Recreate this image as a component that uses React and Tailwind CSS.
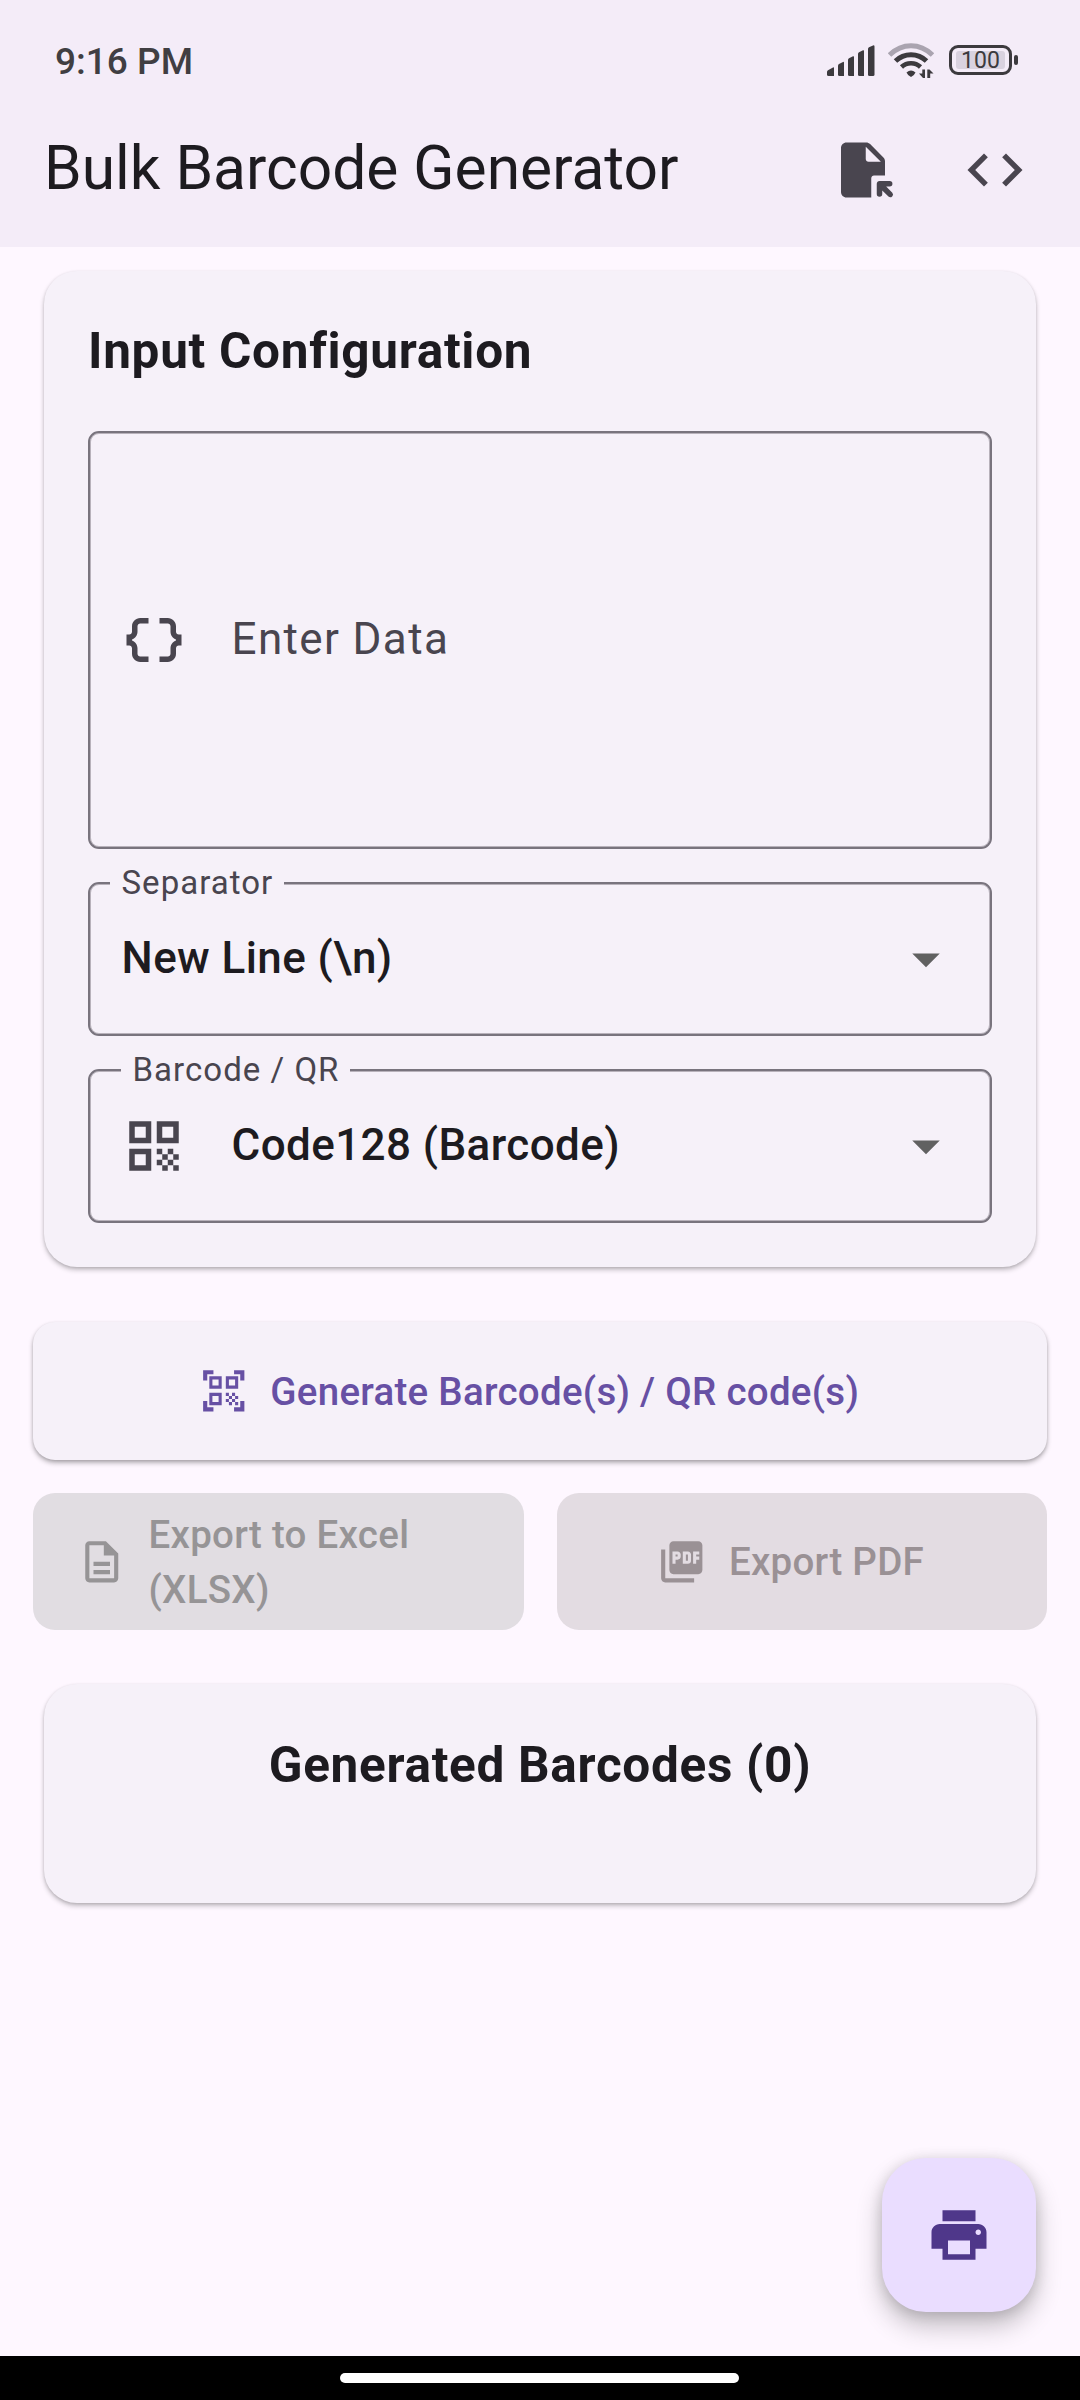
import { MdCode, MdDataObject, MdQrCode, MdQrCodeScanner, MdOutlineDescription, MdPictureAsPdf, MdPrint, MdArrowDropDown } from "react-icons/md";

function SignalIcon() {
  return (
    <svg className="mt-px" width="48" height="32" viewBox="0 0 48 32" fill="#3c3a3e">
      <path d="M0 27Q0 26 1 25.300L6 22.500Q7 22 7 23V31H1.500Q0 31 0 29.500Z" />
      <path d="M11 20.500Q11 19.700 12 19L16 17Q17 16.500 17 17.500V31H12.500Q11 31 11 29.500Z" />
      <path d="M21 15Q21 14 22 13.300L26 11.300Q27 11 27 12V31H22.500Q21 31 21 29.500Z" />
      <path d="M31 9Q31 8 32 7.300L36 5.300Q37 5 37 6V31H32.500Q31 31 31 29.500Z" />
      <path d="M41 4Q41 3 42 2.300L46 .4Q47.500 0 47.500 1.500V29.500Q47.500 31 46 31H42.500Q41 31 41 29.500Z" />
    </svg>
  );
}

function WifiIcon() {
  return (
    <svg className="mt-[2px]" width="46" height="36" viewBox="0 0 46 36" fill="none">
      <path d="M1.500 12Q11 2.700 23 2.700T44.500 12" stroke="#aaa4b0" strokeWidth="5" />
      <path d="M7.500 18Q14 11.700 23 11.700T38.500 18" stroke="#3c3a3e" strokeWidth="5" />
      <path d="M13.500 24Q17.500 20.200 23 20.200T32.500 24" stroke="#3c3a3e" strokeWidth="4.600" />
      <path d="M18.500 29.500Q23 25.500 27.500 29.500Q26 33 23 34Q20 33 18.500 29.500Z" fill="#3c3a3e" />
      <path d="M31 30.500L35 35H37V26.500H34.300V30.500ZM45.500 30.500L41.500 26.500H39.300V35H42.200V30.500Z" fill="#3c3a3e" />
    </svg>
  );
}

function Battery() {
  return (
    <div className="flex items-center gap-[2px]">
      <div className="flex h-[30px] w-[63px] items-center justify-center rounded-[9px] border-3 border-[#3c3a3e]">
        <div className="flex h-[18px] w-[49px] items-center justify-center rounded-[3px] bg-[#d9d2df] pt-[2px] text-[23px] leading-[18px] text-[#3c3a3e]">100</div>
      </div>
      <div className="h-[10px] w-[4px] rounded-[2px] bg-[#3c3a3e]" />
    </div>
  );
}

function FileOpenIcon() {
  return (
    <svg width="66" height="66" viewBox="0 0 24 24" fill="#49454f">
      <path fillRule="evenodd" d="M15 22H6c-1.100 0-2-.9-2-2V4c0-1.100.9-2 2-2h7.170c.53 0 1.040.21 1.420.59l4.830 4.820c.37.38.58.89.58 1.420V14h-4c-.55 0-1 .45-1 1v7zM13 8c0 .55.45 1 1 1h4.500L13 3.500V8z" />
      <path d="M17 20.700V17c0-.55.45-1 1-1h3.700a1 1 0 0 1 0 2h-1.280l2.240 2.240a1 1 0 0 1-1.410 1.410L19 19.410v1.290a1 1 0 0 1-2 0z" />
    </svg>
  );
}

const CARD_SHADOW = "shadow-[0_3px_5px_rgba(0,0,0,0.22),0_1px_3px_rgba(0,0,0,0.12)]";

function SelectField({ label, labelClass, icon, value }) {
  return (
    <div className="relative flex h-[154px] items-center rounded-[11px] border-2 border-[#79747e] pl-[31px] pr-[31px] shadow-[inset_0_0_0_1px_#79747e80]">
      <span className={`absolute -top-[23px] bg-[#f6f1f9] pl-[11.5px] pr-[10.5px] text-[33px] leading-[44px] tracking-[1.03px] text-[#49454f] ${labelClass}`}>{label}</span>
      {icon}
      <span className="mb-[2px] flex-1 pl-[0.5px] text-[44px] font-medium leading-[66px] tracking-[0.41px] text-[#1d1b20]">{value}</span>
      <MdArrowDropDown className="size-[66px] text-[#616161]" />
    </div>
  );
}

export default function App() {
  return (
    <div className="flex h-[2400px] w-[1080px] flex-col overflow-hidden bg-[#fef7ff] font-[Roboto,sans-serif]">
      <header className="h-[247px] bg-[#f4ecf8]">
        <div className="flex h-[93px] items-center justify-between pl-[55px] pr-[62px] pt-[27px]">
          <span className="mt-[3px] text-[37px] font-medium leading-[44px] text-[#403e42]">9:16 PM</span>
          <div className="flex items-center gap-[13px]">
            <SignalIcon />
            <WifiIcon />
            <div className="ml-[2px]">
              <Battery />
            </div>
          </div>
        </div>
        <div className="flex h-[154px] items-center justify-between pl-[44px] pr-[52px]">
          <h1 className="mb-[4px] text-[60.5px] leading-[77px] text-[#1d1b20]">Bulk Barcode Generator</h1>
          <div className="flex gap-[66px]">
            <FileOpenIcon />
            <MdCode className="size-[66px] text-[#49454f]" />
          </div>
        </div>
      </header>

      <main className="relative flex-1 px-[33px] pt-[24px]">
        <section className={`mx-[11px] flex h-[996px] flex-col rounded-[33px] bg-[#f6f1f9] px-[44px] pt-[44px] ${CARD_SHADOW}`}>
          <h2 className="text-[49.5px] font-bold leading-[72px] tracking-[0.69px] text-[#1d1b20]">Input Configuration</h2>
          <div className="mt-[44px] flex h-[418px] items-center gap-[44px] rounded-[11px] border-2 border-[#79747e] pl-[31px] shadow-[inset_0_0_0_1px_#79747e80]">
            <MdDataObject className="size-[66px] text-[#49454f]" />
            <span className="mb-[2px] pl-[0.5px] text-[44px] leading-[66px] tracking-[1.375px] text-[#49454f]">Enter Data</span>
          </div>
          <div className="mt-[33px] flex flex-col gap-[33px]">
            <SelectField label="Separator" labelClass="left-[20px]" value="New Line (\n)" />
            <SelectField
              label="Barcode / QR"
              labelClass="left-[31px]"
              icon={<MdQrCode className="mr-[44px] size-[66px] text-[#49454f]" />}
              value="Code128 (Barcode)"
            />
          </div>
        </section>

        <button className="mt-[55px] flex h-[138px] w-full items-center justify-center gap-[22px] rounded-[22px] bg-[#f6f1f9] pl-[44px] pr-[66px] text-[38.5px] font-medium leading-[55px] tracking-[0.275px] text-[#6750a4] shadow-[0_3px_5px_rgba(0,0,0,0.28),0_1px_3px_rgba(0,0,0,0.12)]">
          <MdQrCodeScanner className="size-[49.5px]" />
          Generate Barcode(s) / QR code(s)
        </button>

        <div className="mt-[33px] grid h-[137px] grid-cols-2 gap-[33px] text-[38.5px] font-medium leading-[55px] tracking-[0.275px]">
          <button className="flex items-center justify-center gap-[22px] rounded-[22px] bg-[#e1dde2] pl-[44px] pr-[66px] text-left text-[#969496]">
            <MdOutlineDescription className="size-[49.5px] shrink-0" />
            <span className="flex-1">Export to Excel (XLSX)</span>
          </button>
          <button className="flex items-center justify-center gap-[22px] rounded-[22px] bg-[#e3dce2] pl-[44px] pr-[66px] text-[#9a9195]">
            <MdPictureAsPdf className="size-[49.5px]" />
            Export PDF
          </button>
        </div>

        <section className={`mx-[11px] mt-[54px] h-[219px] rounded-[33px] bg-[#f6f1f9] pt-[45px] text-center ${CARD_SHADOW}`}>
          <h2 className="text-[49.5px] font-bold leading-[72px] tracking-[0.69px] text-[#1d1b20]">Generated Barcodes (0)</h2>
        </section>

        <button className="absolute bottom-[44px] right-[44px] flex size-[154px] items-center justify-center rounded-[44px] bg-[#eaddff] text-[#4f378a] shadow-[0_14px_26px_rgba(0,0,0,0.24),0_2px_14px_rgba(0,0,0,0.14)]">
          <MdPrint className="size-[66px]" />
        </button>
      </main>

      <footer className="z-10 flex h-[44px] items-center justify-center bg-black pr-px">
        <div className="h-[10px] w-[399px] rounded-full bg-white" />
      </footer>
    </div>
  );
}
